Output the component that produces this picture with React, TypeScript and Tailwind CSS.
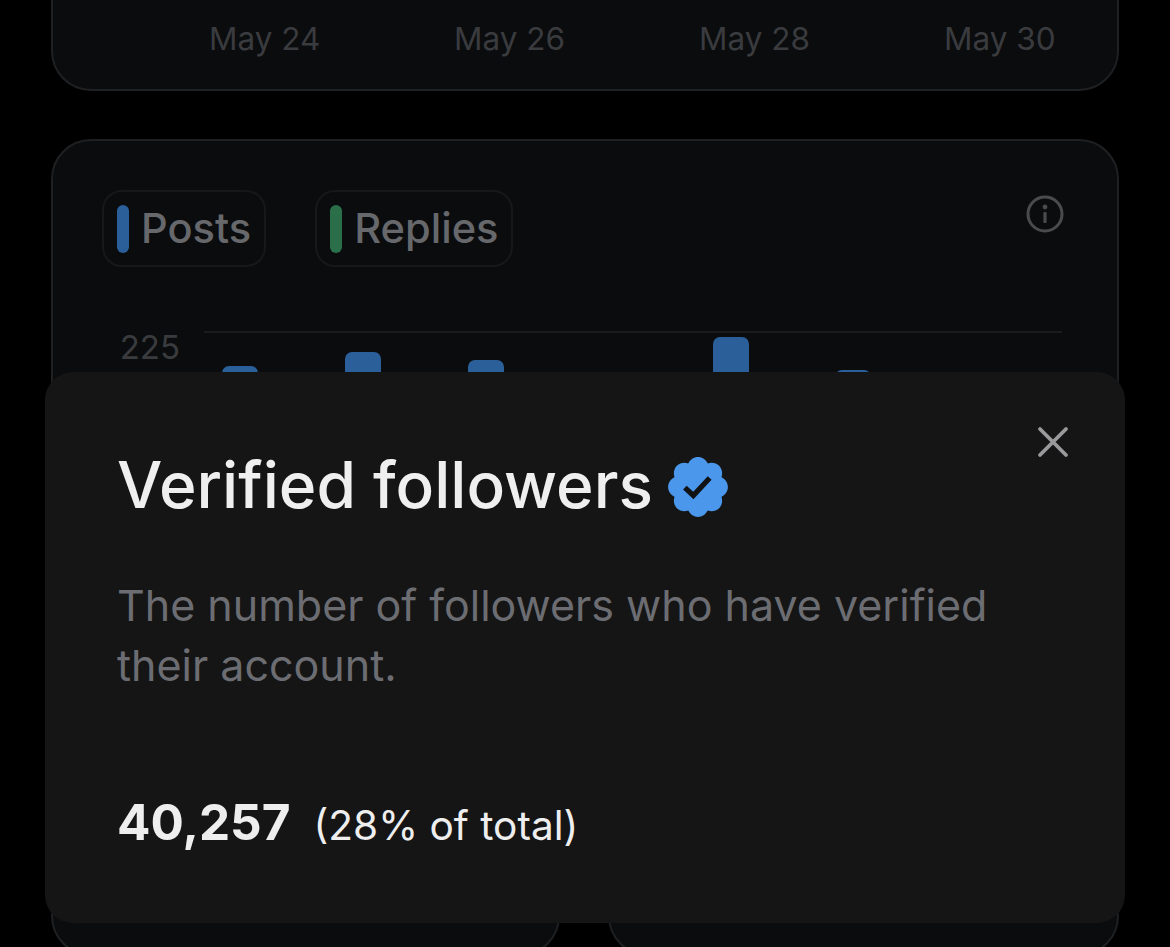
const DATES = ["May 24", "May 26", "May 28", "May 30"];
const BARS = [335, 349, 341, 0, 364, 331, 0];

function Pill({ label, bar }: { label: string; bar: string }) {
  return (
    <div className="flex h-[77px] items-center gap-[12px] rounded-[20px] border-2 border-[#17181a] pl-[13px] pr-[13px]">
      <div className={`h-[48px] w-[12px] rounded-full ${bar}`} />
      <span className="text-[41.6px] font-medium leading-none text-[#66686b]">{label}</span>
    </div>
  );
}

export default function App() {
  return (
    <div className="relative h-[947px] w-[1170px] overflow-hidden bg-black pl-[51px] pr-[51px] font-['Inter',sans-serif]">
      {/* top chart card, cut by the viewport */}
      <div className="-mt-[60px] flex h-[151px] items-end gap-[135px] rounded-[40px] border-2 border-[#1f2022] bg-[#0b0c0e] pb-[30px] pl-[156px]">
        {DATES.map((d) => (
          <span key={d} className="w-[110px] whitespace-nowrap text-[31.5px] leading-[40px] text-[#3a3b3e]">
            {d}
          </span>
        ))}
      </div>

      {/* posts / replies card */}
      <div className="mt-[48px] h-[688px] rounded-[40px] border-2 border-[#1f2022] bg-[#0b0c0e] pl-[49px] pr-[55px] pt-[49px]">
        <div className="flex items-start justify-between">
          <div className="flex gap-[49px]">
            <Pill label="Posts" bar="bg-[#2a5f9a]" />
            <Pill label="Replies" bar="bg-[#2a6e4a]" />
          </div>
          <svg width="38" height="38" viewBox="0 0 38 38" fill="none" className="-mr-[2px] mt-[5px]">
            <circle cx="19" cy="19" r="17" stroke="#4a4b4d" strokeWidth="3" />
            <circle cx="19" cy="12" r="2.4" fill="#4a4b4d" />
            <rect x="17.4" y="17" width="3.2" height="11" rx="1" fill="#4a4b4d" />
          </svg>
        </div>
        <div className="mt-[64px] flex">
          <div className="w-[102px] pr-[24px] text-right text-[33px] leading-[32px] text-[#3a3b3e]">225</div>
          <div className="flex-1 border-t-2 border-[#1a1b1d]">
            <div className="flex h-[368px] items-end gap-[86.6px] pl-[18.4px]">
              {BARS.map((h, i) => (
                <div key={i} className="w-[36px] rounded-t-[7px] bg-[#2a5f9a]" style={{ height: h }} />
              ))}
            </div>
          </div>
        </div>
      </div>

      {/* bottom cards, mostly behind the sheet */}
      <div className="mt-[49px] flex gap-[48px]">
        <div className="h-[80px] w-[509px] rounded-[40px] border-2 border-[#1f2022] bg-[#0b0c0e]" />
        <div className="h-[80px] w-[511px] rounded-[40px] border-2 border-[#1f2022] bg-[#0b0c0e]" />
      </div>

      {/* info sheet */}
      <div className="absolute left-[45px] top-[372px] h-[551px] w-[1080px] rounded-[28px] bg-[#151515] pl-[72px] pt-[73px]">
        <svg width="32" height="32" viewBox="0 0 32 32" fill="none" className="absolute right-[56px] top-[54px]">
          <path d="M3 3 L29 29 M29 3 L3 29" stroke="#9a9a9c" strokeWidth="3.8" strokeLinecap="round" />
        </svg>
        <div className="flex items-center gap-[15px]">
          <h1 className="text-[64px] font-medium leading-[80px] text-[#efefef]">Verified followers</h1>
          <svg width="70" height="70" viewBox="0 0 24 24" className="mt-[3px] -ml-[5px]">
            <path
              fill="#4a97ec"
              d="M22.25 12c0-1.43-.88-2.67-2.19-3.34.46-1.39.2-2.9-.81-3.91s-2.52-1.27-3.91-.81c-.66-1.31-1.91-2.19-3.34-2.19s-2.67.88-3.33 2.19c-1.4-.46-2.91-.2-3.92.81s-1.26 2.52-.8 3.91c-1.31.67-2.2 1.91-2.2 3.34s.89 2.67 2.2 3.34c-.46 1.39-.21 2.9.8 3.91s2.52 1.26 3.91.81c.67 1.31 1.91 2.19 3.34 2.19s2.68-.88 3.34-2.19c1.39.45 2.9.2 3.91-.81s1.27-2.52.81-3.91c1.31-.67 2.19-1.91 2.19-3.34z"
            />
            <path d="M7.5 12.2l2.9 2.7 5.6-6" fill="none" stroke="#111214" strokeWidth="1.8" />
          </svg>
        </div>
        <p className="mt-[50px] w-[900px] text-[43px] leading-[60px] text-[#6c6d72]">
          The number of followers who have verified their account.
        </p>
        <div className="mt-[97px] flex items-baseline gap-[23px] text-[#eeeeee]">
          <span className="text-[49.5px] font-bold leading-[60px]">40,257</span>
          <span className="text-[40.6px] leading-[60px]">(28% of total)</span>
        </div>
      </div>
    </div>
  );
}
